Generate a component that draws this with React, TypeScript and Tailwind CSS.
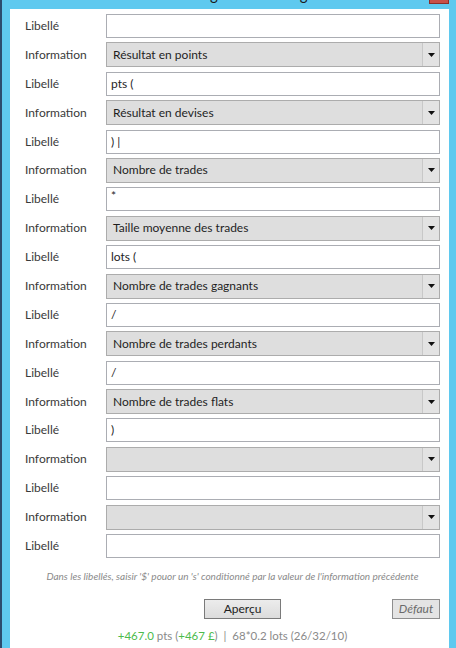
import React from "react";

const rows: { kind: "lib" | "info"; value: string }[] = [
  { kind: "lib", value: "" },
  { kind: "info", value: "Résultat en points" },
  { kind: "lib", value: "pts (" },
  { kind: "info", value: "Résultat en devises" },
  { kind: "lib", value: ") |" },
  { kind: "info", value: "Nombre de trades" },
  { kind: "lib", value: "*" },
  { kind: "info", value: "Taille moyenne des trades" },
  { kind: "lib", value: "lots (" },
  { kind: "info", value: "Nombre de trades gagnants" },
  { kind: "lib", value: "/" },
  { kind: "info", value: "Nombre de trades perdants" },
  { kind: "lib", value: "/" },
  { kind: "info", value: "Nombre de trades flats" },
  { kind: "lib", value: ")" },
  { kind: "info", value: "" },
  { kind: "lib", value: "" },
  { kind: "info", value: "" },
  { kind: "lib", value: "" },
];

export default function App() {
  return (
    <div
      className="w-[456px] h-[648px] bg-[#5fc9ef] border-l-2 border-[#2c4c6e] flex flex-col overflow-hidden relative"
      style={{ fontFamily: 'Lato, "Noto Sans", sans-serif' }}
    >
      {/* title bar */}
      <div className="h-[9px] relative overflow-hidden shrink-0">
        <div className="absolute left-0 right-0 top-[-16px] text-center text-[15px] text-[#1a1a1a] leading-[20px]">
          Paramétrage de l'affichage
        </div>
        <div className="absolute left-[427px] top-0 w-[20px] h-[4px] bg-[#c75048] border border-t-0 border-[#8a2f2a]" />
      </div>
      <div className="ml-[8px] mr-[7px] flex-1 bg-white flex flex-col pl-[15px] pr-[9px] pt-[5px]">
        <div className="flex flex-col gap-[4.4px]">
          {rows.map((r, i) => (
            <div key={i} className="flex items-center">
              <div className="w-[81px] text-[12px] text-[#3a3a3a] leading-none">
                {r.kind === "lib" ? "Libellé" : "Information"}
              </div>
              {r.kind === "lib" ? (
                <div className="flex-1 h-[24px] border border-[#abadb3] bg-white flex items-center px-[4px] text-[12px] text-[#1e1e1e]">
                  <span className={r.value === "*" ? "-mt-[6px]" : ""}>{r.value}</span>
                </div>
              ) : (
                <div className="flex-1 h-[25px] border border-[#acacac] bg-[#dedede] flex items-center text-[12px] text-[#1e1e1e]">
                  <div className="flex-1 pl-[6px]">{r.value}</div>
                  <div className="w-[17px] h-full border-l border-[#c8c8c8] bg-[#e3e3e3] flex items-center justify-center">
                    <svg width="7" height="4" viewBox="0 0 7 4">
                      <path d="M0 0 H7 L3.5 4 Z" fill="#111" />
                    </svg>
                  </div>
                </div>
              )}
            </div>
          ))}
        </div>
        <div className="mt-[13px] text-center text-[10px] italic text-[#8a8a8a] leading-none">
          Dans les libellés, saisir '$' pouor un 's' conditionné par la valeur de l'information précédente
        </div>
        <div className="mt-[18px] flex items-center">
          <div className="w-[179px]" />
          <div className="w-[77px] h-[20px] border border-[#7a7a7a] bg-gradient-to-b from-[#ececec] to-[#dcdcdc] flex items-center justify-center text-[12px] text-[#1e1e1e]">
            Aperçu
          </div>
          <div className="flex-1" />
          <div className="w-[48px] h-[20px] border border-[#8e8e8e] bg-[#e4e4e4] flex items-center justify-center text-[12px] italic text-[#6a6a6a]">
            Défaut
          </div>
        </div>
        <div className="mt-[11px] text-center text-[11.5px] text-[#8a8a8a] leading-none">
          <span className="text-[#4cbb4c]">+467.0</span> pts (
          <span className="text-[#4cbb4c]">+467 £</span>) &nbsp;|&nbsp; 68*0.2 lots (26/32/10)
        </div>
      </div>
    </div>
  );
}
